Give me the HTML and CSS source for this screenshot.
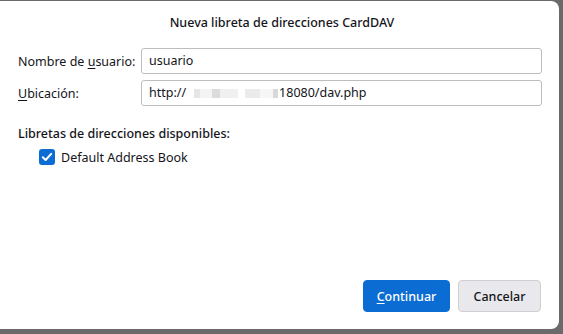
FILE: index.html
```html
<!DOCTYPE html>
<html lang="es">
<head>
    <meta charset="UTF-8">
    <title>Nueva libreta de direcciones CardDAV</title>
    <link rel="stylesheet" href="styles.css">
</head>
<body>
    <div class="dialog">
        <h1 class="title">Nueva libreta de direcciones CardDAV</h1>

        <div class="fields">
            <label class="label" for="username">Nombre de <u>u</u>suario:</label>
            <div class="input" id="username">usuario</div>
            <label class="label" for="location"><u>U</u>bicación:</label>
            <div class="input" id="location">http://<span class="blur"></span>18080/dav.php</div>
        </div>

        <h2 class="section">Libretas de direcciones disponibles:</h2>
        <div class="check-row">
            <span class="checkbox">
                <svg width="16" height="16" viewBox="0 0 16 16">
                    <path d="M3.8 8.3 L6.6 11 L12.2 4.9" fill="none" stroke="#fff" stroke-width="2" stroke-linecap="round" stroke-linejoin="round"/>
                </svg>
            </span>
            <span>Default Address Book</span>
        </div>

        <div class="buttons">
            <button class="btn primary"><u>C</u>ontinuar</button>
            <button class="btn">Cancelar</button>
        </div>
    </div>
</body>
</html>
```

FILE: styles.css
```css
html, body {
    margin: 0;
    width: 563px;
    height: 334px;
    overflow: hidden;
}
body {
    background: #6a6a6a;
    font-family: "Noto Sans", "Open Sans", sans-serif;
    font-size: 12.5px;
    color: #15141a;
}
.dialog {
    box-sizing: border-box;
    margin: 1px 0 0 -8px;
    width: 567px;
    height: 328px;
    background: #fff;
    border-radius: 8px;
    padding: 0 17px 17px 26px;
    display: flex;
    flex-direction: column;
}
.title {
    margin: 0;
    padding-top: 12px;
    height: 19px;
    line-height: 19px;
    font-size: 12.5px;
    font-weight: 500;
    text-align: center;
    padding-left: 4px;
}
.fields {
    margin-top: 16px;
    display: grid;
    grid-template-columns: 123px 1fr;
    row-gap: 6px;
    align-items: center;
}
.label u, .btn u {
    text-underline-offset: 2px;
}
.input {
    box-sizing: border-box;
    height: 26px;
    border: 1px solid #bdbdbd;
    border-radius: 3px;
    padding: 0 7px;
    line-height: 24px;
    display: flex;
    align-items: center;
}
.blur {
    display: inline-block;
    width: 91px;
    height: 9px;
    margin: 0 1px;
    background: linear-gradient(90deg, #fff 0 8%, #e6e6e6 8% 14%, #f4f4f4 14% 28%, #dcdcdc 28% 36%, #f0f0f0 36% 56%, #fff 56% 64%, #ebebeb 64% 80%, #f6f6f6 80% 94%, #d8d8d8 94%);
}
.section {
    margin: 19px 0 0;
    font-size: 12.5px;
    font-weight: 500;
    line-height: 17px;
}
.check-row {
    margin: 6px 0 0 21px;
    display: flex;
    align-items: center;
    gap: 6px;
    height: 18px;
}
.checkbox {
    width: 16px;
    height: 16px;
    border-radius: 3px;
    background: #0b6dd4;
    display: flex;
}
.buttons {
    margin-top: auto;
    margin-right: 1px;
    display: flex;
    justify-content: flex-end;
    gap: 8px;
}
.btn {
    box-sizing: border-box;
    height: 32px;
    width: 83px;
    border: 1px solid #cfcfcf;
    border-radius: 4px;
    background: #e9e9ed;
    font-family: inherit;
    font-size: 12.5px;
    font-weight: 500;
    color: #15141a;
}
.btn.primary {
    width: 87px;
    background: #0b6dd4;
    border-color: #0b6dd4;
    color: #fff;
}
```
